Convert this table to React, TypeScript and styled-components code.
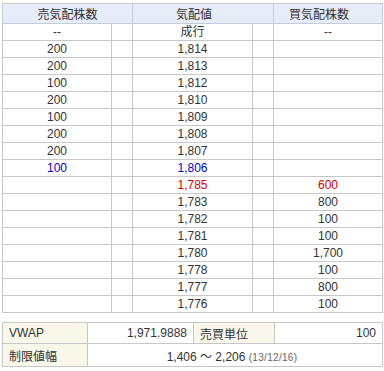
import * as React from "react"
import styled, { createGlobalStyle } from "styled-components"

const GlobalStyle = createGlobalStyle`
  html, body {
    margin: 0;
    padding: 0;
    background: #fff;
  }
  body {
    font-family: "Liberation Sans", "Noto Sans CJK JP", sans-serif;
    font-size: 12px;
    color: #333;
  }
`

type Tone = "normal" | "sell" | "buy"

type Row = {
  sell: string
  price: string
  buy: string
  sellTone?: Tone
  priceTone?: Tone
  buyTone?: Tone
}

const rows: Row[] = [
  { sell: "--", price: "成行", buy: "--" },
  { sell: "200", price: "1,814", buy: "" },
  { sell: "200", price: "1,813", buy: "" },
  { sell: "100", price: "1,812", buy: "" },
  { sell: "200", price: "1,810", buy: "" },
  { sell: "100", price: "1,809", buy: "" },
  { sell: "200", price: "1,808", buy: "" },
  { sell: "200", price: "1,807", buy: "" },
  { sell: "100", price: "1,806", buy: "", sellTone: "buy", priceTone: "buy" },
  { sell: "", price: "1,785", buy: "600", priceTone: "sell", buyTone: "sell" },
  { sell: "", price: "1,783", buy: "800" },
  { sell: "", price: "1,782", buy: "100" },
  { sell: "", price: "1,781", buy: "100" },
  { sell: "", price: "1,780", buy: "1,700" },
  { sell: "", price: "1,778", buy: "100" },
  { sell: "", price: "1,777", buy: "800" },
  { sell: "", price: "1,776", buy: "100" },
]

const toneColor = (t?: Tone) =>
  t === "sell" ? "#d40000" : t === "buy" ? "#0000c8" : "#333"

const Page = styled.div`
  padding: 3px 0 0 2px;
  width: 380px;
`

const Board = styled.table`
  width: 380px;
  table-layout: fixed;
  border-collapse: collapse;
  border: 1px solid #c8c8c8;
`

const HeadCell = styled.th<{ $shift?: boolean }>`
  height: 19px;
  padding: 0 ${({ $shift }) => ($shift ? "18px" : "0")} 0 0;
  background: #e6ecf8;
  border: 1px solid #c4ccdc;
  border-top-color: #c8c8c8;
  font-family: "Noto Sans CJK JP", sans-serif;
  font-weight: normal;
  font-size: 12px;
  color: #333;
  text-align: center;
  line-height: 19px;
`

const Cell = styled.td<{ $tone?: Tone }>`
  height: 16px;
  padding: 0;
  border: 1px solid #c8c8c8;
  text-align: center;
  line-height: 16px;
  color: ${({ $tone }) => toneColor($tone)};
  font-family: "Liberation Sans", "Noto Sans CJK JP", sans-serif;
  white-space: nowrap;
`

const Info = styled.table`
  margin-top: 9px;
  width: 380px;
  table-layout: fixed;
  border-collapse: collapse;
  border: 1px solid #c8c8c8;
`

const Label = styled.td<{ $tall?: boolean }>`
  height: ${({ $tall }) => ($tall ? "22px" : "20px")};
  padding: 0 0 0 6px;
  background: #f8f7ea;
  border: 1px solid #c8c8c8;
  font-family: "Liberation Sans", "Noto Sans CJK JP", sans-serif;
  font-size: 12px;
  color: #333;
  white-space: nowrap;
`

const Value = styled.td<{ $center?: boolean }>`
  padding: 0 6px 0 0;
  border: 1px solid #c8c8c8;
  text-align: ${({ $center }) => ($center ? "center" : "right")};
  font-family: "Liberation Sans", "Noto Sans CJK JP", sans-serif;
  color: #333;
  white-space: nowrap;
`

const DateNote = styled.span`
  font-size: 10px;
  color: #666;
  letter-spacing: 0.3px;
`

const App = () => (
  <Page>
    <GlobalStyle />
    <Board>
      <colgroup>
        <col style={{ width: 109 }} />
        <col style={{ width: 21 }} />
        <col style={{ width: 120 }} />
        <col style={{ width: 21 }} />
        <col style={{ width: 109 }} />
      </colgroup>
      <thead>
        <tr>
          <HeadCell colSpan={2}>売気配株数</HeadCell>
          <HeadCell colSpan={2} $shift>
            気配値
          </HeadCell>
          <HeadCell $shift>買気配株数</HeadCell>
        </tr>
      </thead>
      <tbody>
        {rows.map(r => (
          <tr key={r.price}>
            <Cell $tone={r.sellTone}>{r.sell}</Cell>
            <Cell />
            <Cell $tone={r.priceTone}>{r.price}</Cell>
            <Cell />
            <Cell $tone={r.buyTone}>{r.buy}</Cell>
          </tr>
        ))}
      </tbody>
    </Board>
    <Info>
      <colgroup>
        <col style={{ width: 85 }} />
        <col style={{ width: 106 }} />
        <col style={{ width: 81 }} />
        <col style={{ width: 108 }} />
      </colgroup>
      <tbody>
        <tr>
          <Label>VWAP</Label>
          <Value>1,971.9888</Value>
          <Label>売買単位</Label>
          <Value>100</Value>
        </tr>
        <tr>
          <Label $tall>制限値幅</Label>
          <Value colSpan={3} $center>
            1,406 ～ 2,206 <DateNote>(13/12/16)</DateNote>
          </Value>
        </tr>
      </tbody>
    </Info>
  </Page>
)

export default App
